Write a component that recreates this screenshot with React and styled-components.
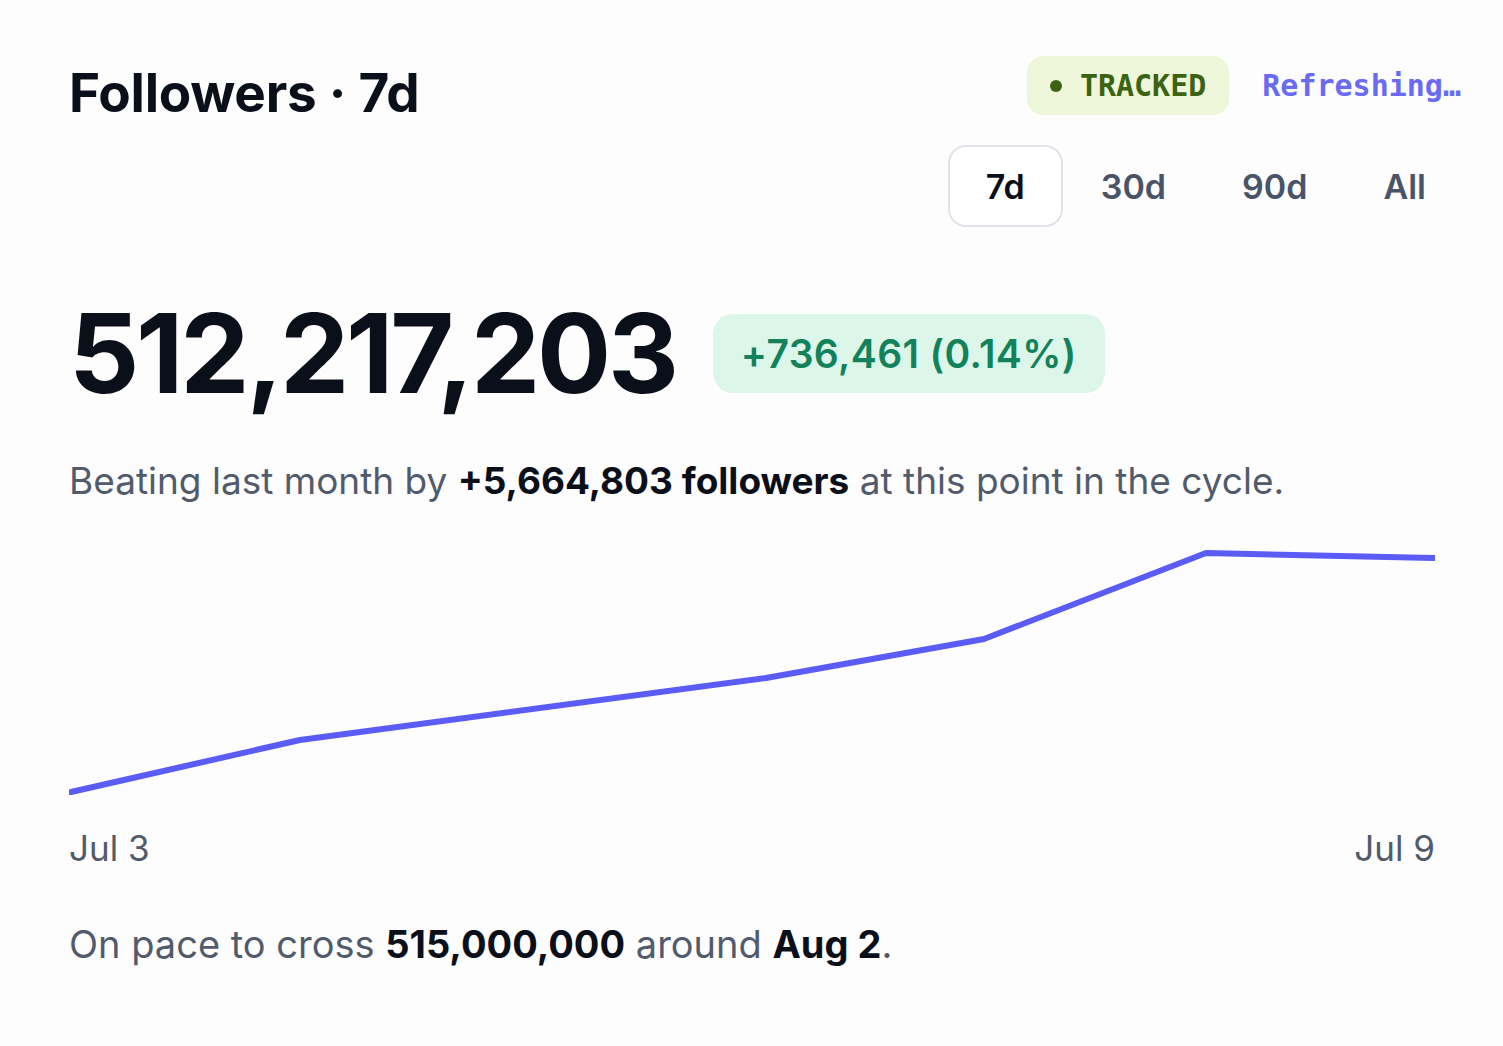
import React from "react";
import styled, { createGlobalStyle } from "styled-components";

const GlobalStyle = createGlobalStyle`
  html, body {
    margin: 0;
    padding: 0;
    background: #fdfdfe;
  }
  body {
    font-family: Inter, "Liberation Sans", Arial, sans-serif;
    color: #0b0f19;
  }
`;

const Page = styled.div`
  width: 1392px;
  padding: 56px 0 0 69px;
`;

const Header = styled.div`
  display: flex;
  justify-content: space-between;
  align-items: flex-start;
`;

const Title = styled.h1`
  margin: 11px 0 0 0;
  font-size: 53px;
  line-height: 1;
  font-weight: 700;
  letter-spacing: -0.005em;
  color: #0b0f19;
`;

const HeaderRight = styled.div`
  display: flex;
  flex-direction: column;
  align-items: flex-end;
  gap: 30px;
`;

const StatusRow = styled.div`
  display: flex;
  align-items: center;
  gap: 33px;
`;

const Mono = styled.span`
  font-family: "DejaVu Sans Mono", "Liberation Mono", monospace;
  font-weight: 700;
  font-size: 30px;
  line-height: 1;
`;

const TrackedPill = styled(Mono)`
  display: flex;
  align-items: center;
  gap: 18px;
  height: 59px;
  padding: 0 23px;
  border-radius: 16px;
  background: #eef7d9;
  color: #3b6313;
`;

const Dot = styled.span`
  width: 12px;
  height: 12px;
  border-radius: 50%;
  background: #3b6313;
`;

const Refreshing = styled(Mono)`
  color: #6a6af4;
`;

const Tabs = styled.div`
  display: flex;
  gap: 0;
  margin-right: -3px;
`;

const Tab = styled.button`
  height: 82px;
  padding: 0 36px;
  border-radius: 18px;
  border: 2px solid ${({ $active }) => ($active ? "#dfe3ea" : "transparent")};
  background: ${({ $active }) => ($active ? "#ffffff" : "transparent")};
  font-family: Inter, "Liberation Sans", Arial, sans-serif;
  font-size: 34px;
  font-weight: 600;
  color: ${({ $active }) => ($active ? "#0b0f19" : "#4a5468")};
  cursor: pointer;
`;

const ValueRow = styled.div`
  display: flex;
  align-items: center;
  gap: 37px;
  margin-top: 71px;
`;

const BigValue = styled.div`
  font-size: 110px;
  line-height: 1;
  font-weight: 700;
  letter-spacing: -0.029em;
  color: #0b0f19;
`;

const DeltaBadge = styled.div`
  display: flex;
  align-items: center;
  height: 79px;
  padding: 0 28px;
  border-radius: 20px;
  background: #ddf6ea;
  color: #12825a;
  font-size: 39px;
  font-weight: 600;
  letter-spacing: 0.01em;
`;

const Sentence = styled.p`
  margin: ${({ $top }) => $top}px 0 0 0;
  font-size: ${({ $size }) => $size}px;
  line-height: 1.3;
  color: #525b6b;
`;

const Strong = styled.strong`
  font-weight: 700;
  color: #0b0f19;
`;

const ChartBox = styled.div`
  width: 1366px;
  margin-top: 24px;
`;

const ChartSvg = styled.svg`
  display: block;
`;

const AxisRow = styled.div`
  display: flex;
  justify-content: space-between;
  margin-top: 17px;
  font-size: 35px;
  line-height: 1.3;
  color: #525b6b;
`;

const points = [
  [2, 263],
  [231, 211],
  [697, 149],
  [915, 110],
  [1137, 24],
  [1365, 29],
];

function LineChart() {
  const d = points.map(([x, y], i) => `${i ? "L" : "M"}${x} ${y}`).join(" ");
  return (
    <ChartSvg width="1366" height="280" viewBox="0 0 1366 280">
      <path
        d={d}
        fill="none"
        stroke="#5b5cf6"
        strokeWidth="6"
        strokeLinecap="round"
        strokeLinejoin="round"
      />
    </ChartSvg>
  );
}

export default function App() {
  return (
    <>
      <GlobalStyle />
      <Page>
        <Header>
          <Title>Followers · 7d</Title>
          <HeaderRight>
            <StatusRow>
              <TrackedPill>
                <Dot />
                TRACKED
              </TrackedPill>
              <Refreshing>Refreshing…</Refreshing>
            </StatusRow>
            <Tabs>
              <Tab $active>7d</Tab>
              <Tab>30d</Tab>
              <Tab>90d</Tab>
              <Tab>All</Tab>
            </Tabs>
          </HeaderRight>
        </Header>

        <ValueRow>
          <BigValue>512,217,203</BigValue>
          <DeltaBadge>+736,461 (0.14%)</DeltaBadge>
        </ValueRow>

        <Sentence $top={49} $size={37}>
          Beating last month by <Strong>+5,664,803 followers</Strong> at this
          point in the cycle.
        </Sentence>

        <ChartBox>
          <LineChart />
          <AxisRow>
            <span>Jul 3</span>
            <span>Jul 9</span>
          </AxisRow>
        </ChartBox>

        <Sentence $top={48} $size={38}>
          On pace to cross <Strong>515,000,000</Strong> around{" "}
          <Strong>Aug 2</Strong>.
        </Sentence>
      </Page>
    </>
  );
}
